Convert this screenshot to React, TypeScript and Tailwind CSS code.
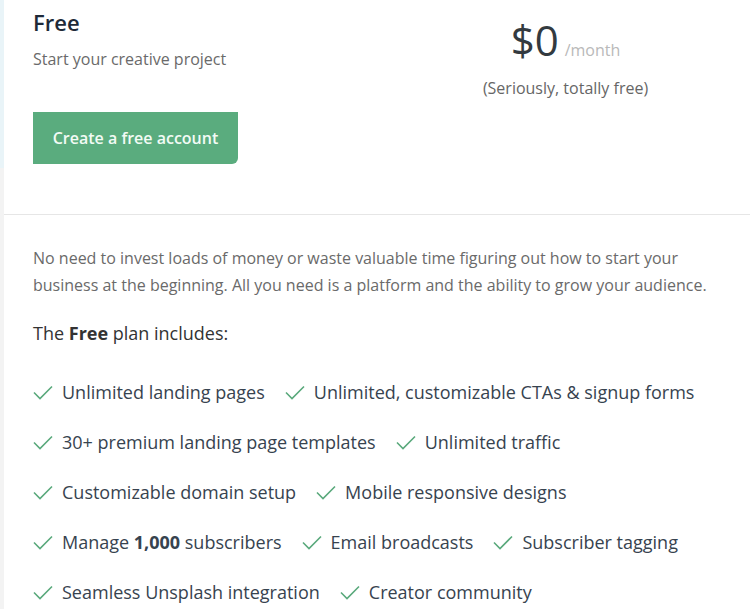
const features: { text: React.ReactNode }[] = [
  { text: "Unlimited landing pages" },
  { text: "Unlimited, customizable CTAs & signup forms" },
  { text: "30+ premium landing page templates" },
  { text: "Unlimited traffic" },
  { text: "Customizable domain setup" },
  { text: "Mobile responsive designs" },
  {
    text: (
      <>
        Manage <b className="font-bold">1,000</b> subscribers
      </>
    ),
  },
  { text: "Email broadcasts" },
  { text: "Subscriber tagging" },
  { text: "Seamless Unsplash integration" },
  { text: "Creator community" },
];

function Check() {
  return (
    <svg width="20" height="15" viewBox="0 0 20 15" className="shrink-0">
      <polyline
        points="1,7.5 7,13.5 19,1.5"
        fill="none"
        stroke="#5aa97c"
        strokeWidth="1.6"
      />
    </svg>
  );
}

export default function App() {
  return (
    <div
      className="flex min-h-[609px] w-[750px] bg-white"
      style={{ fontFamily: '"Open Sans", "Noto Sans", sans-serif' }}
    >
      <div className="flex w-[4px] flex-col">
        <div className="h-[168px] bg-[#e9f4f8]" />
        <div className="flex-1 bg-[#f3f3f3]" />
      </div>

      <div className="flex-1">
        <div className="flex border-b border-[#e6e6e6] pb-[50px]">
          <div className="w-[371px] pl-[29px] pt-[7px]">
            <h1 className="text-[22px] leading-[30px] font-semibold text-[#1e2a38]">Free</h1>
            <p className="mt-[10px] text-[16px] leading-[24px] text-[#6a6a6a]">
              Start your creative project
            </p>
            <button className="mt-[41px] h-[52px] w-[205px] rounded-br-[6px] bg-[#5aac7e] text-[16px] font-semibold text-[#f2fbf5]">
              Create a free account
            </button>
          </div>
          <div className="flex flex-1 flex-col items-center pt-[14px] pl-[6px]">
            <div className="flex items-baseline">
              <span className="text-[42px] leading-[52px] text-[#333a40]">$0</span>
              <span className="ml-[6px] text-[16px] text-[#b9b9b9]">/month</span>
            </div>
            <p className="mt-[10px] text-[16px] leading-[24px] text-[#666]">
              (Seriously, totally free)
            </p>
          </div>
        </div>

        <div className="pl-[29px] pr-[20px] pt-[30px]">
          <p className="text-[16px] leading-[27px] text-[#6a6a6a]">
            No need to invest loads of money or waste valuable time figuring out how to start your
            <br />
            business at the beginning. All you need is a platform and the ability to grow your
            audience.
          </p>
          <p className="mt-[20px] text-[18px] leading-[28px] text-[#333]">
            The <b className="font-bold">Free</b> plan includes:
          </p>
          <ul className="mt-[31px] flex flex-wrap gap-x-[20px] gap-y-[22px]">
            {features.map((f, i) => (
              <li
                key={i}
                className="flex items-center gap-[9px] text-[18px] leading-[28px] text-[#37434f]"
              >
                <Check />
                <span>{f.text}</span>
              </li>
            ))}
          </ul>
        </div>
      </div>
    </div>
  );
}
